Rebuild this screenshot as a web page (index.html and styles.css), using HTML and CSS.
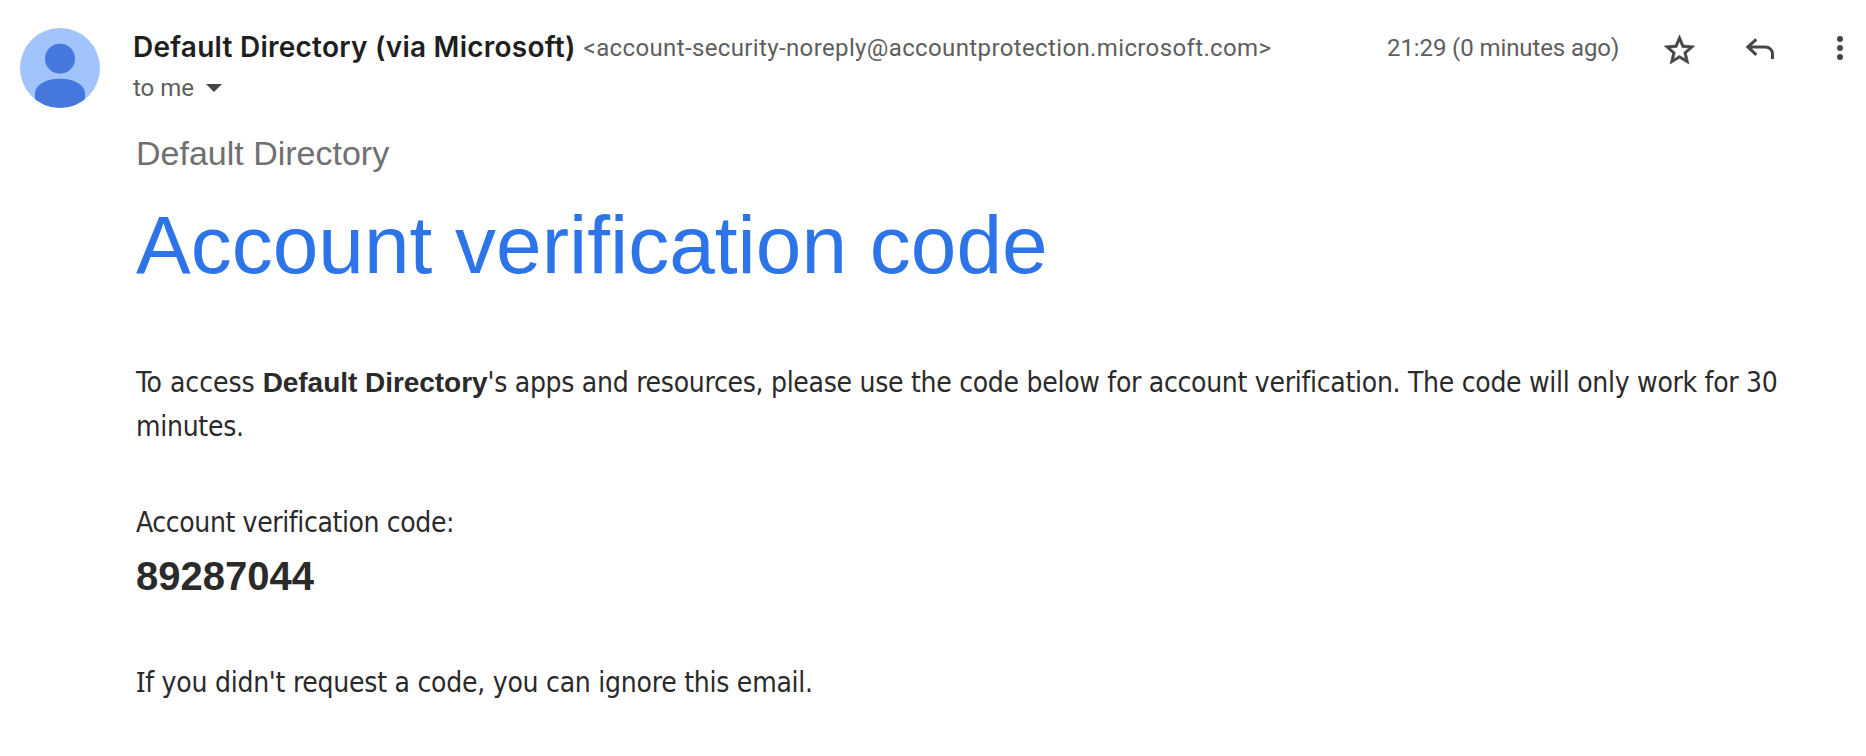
FILE: index.html
```html
<!DOCTYPE html>
<html lang="en">
<head>
<meta charset="utf-8">
<title>Account verification code</title>
<link rel="stylesheet" href="styles.css">
</head>
<body>
<article class="message">
  <svg class="avatar" viewBox="0 0 80 80" aria-hidden="true">
    <defs><clipPath id="disc"><circle cx="40" cy="40" r="40"/></clipPath></defs>
    <circle cx="40" cy="40" r="40" fill="#a1c4fd"/>
    <g clip-path="url(#disc)" fill="#4577dd">
      <circle cx="40" cy="30.7" r="15"/>
      <path d="M15 80V66C15 56 27 50.700 40 50.700S65 56 65 66V80Z"/>
    </g>
  </svg>
  <div class="main">
    <header class="header">
      <div class="sender">
        <span class="name">Default Directory (via Microsoft)</span>
        <span class="email">&lt;account-security-noreply@accountprotection.microsoft.com&gt;</span>
      </div>
      <div class="tools">
        <span class="time">21:29 (0 minutes ago)</span>
        <svg class="star" viewBox="2 2 20 19"><path d="M22 9.240l-7.190-.620L12 2 9.190 8.630 2 9.240l5.460 4.730L5.820 21 12 17.270 18.180 21l-1.630-7.030L22 9.240zM12 15.400l-3.760 2.270 1-4.280-3.320-2.880 4.380-.380L12 6.100l1.710 4.040 4.380.380-3.320 2.880 1 4.280L12 15.400z"/></svg>
        <svg class="reply" viewBox="0 0 28 22"><path d="M10.300 1.300L1.900 8.900l8.400 7.900M2 8.900h17.500a7 7 0 0 1 7 7V21"/></svg>
        <svg class="more" viewBox="0 0 6 24"><circle cx="3" cy="3" r="3"/><circle cx="3" cy="12" r="3"/><circle cx="3" cy="21" r="3"/></svg>
      </div>
    </header>
    <div class="recipient">to me <svg class="caret" viewBox="0 0 16 8"><path d="M0 0h16L8 8z"/></svg></div>
    <section class="body">
      <p class="org">Default Directory</p>
      <h1 class="title">Account verification code</h1>
      <p class="text"><span class="lead">To access </span><b class="tenant">Default Directory</b>'s apps and resources, please use the code below for account verification. The code will only work for 30 minutes.</p>
      <p class="text label">Account verification code:</p>
      <p class="code">89287044</p>
      <p class="text note"><span class="cap">I</span>f you didn't request a code, you can ignore this email.</p>
    </section>
  </div>
</article>
</body>
</html>
```
FILE: styles.css
```css
* { box-sizing: border-box; }
body { margin: 0; background: #fff; }
p, h1 { margin: 0; font-weight: 400; }
svg { display: block; flex: none; }

.message { display: flex; height: 756px; padding: 28px 23px 0 20px; gap: 33px; }
.avatar { width: 80px; height: 80px; }
.main { flex: 1; min-width: 0; }

.header { display: flex; justify-content: space-between; height: 40px; font: 24px/40px Roboto, sans-serif; color: #5e5e5e; white-space: nowrap; }
.sender { display: flex; align-items: flex-start; gap: 8px; }
.name { font: 600 28px/39px Inter, sans-serif; letter-spacing: .24px; color: #1f1f1f; }
.email { letter-spacing: .37px; }
.tools { display: flex; align-items: flex-start; }
.time { width: 277px; letter-spacing: -.1px; }
.star { width: 31px; height: 29px; margin-top: 7px; fill: #444746; stroke: #444746; stroke-width: .4; overflow: visible; }
.reply { width: 28px; height: 22px; margin: 10px 63px 0 51px; fill: none; stroke: #444746; stroke-width: 3; }
.more { width: 6px; height: 24px; margin-top: 8px; fill: #444746; }

.recipient { display: flex; align-items: center; gap: 12px; height: 40px; font: 24px/40px Roboto, sans-serif; color: #5e5e5e; }
.caret { width: 16px; height: 8px; fill: #444746; }

.body { padding: 25px 55px 0 3px; color: #2a2a2a; }
.org { font: 34px/40px "Liberation Sans", Arial, sans-serif; color: #707070; }
.title { margin-top: 24px; font: 82px/96px "Liberation Sans", Arial, sans-serif; color: #2c74e8; }
.text { font: 28px/44px "DejaVu Sans Condensed", "DejaVu Sans", sans-serif; letter-spacing: -.285px; }
.title + .text { margin-top: 68px; }
.lead { letter-spacing: -.03px; }
.tenant { font: 700 28px/40px "Liberation Sans", Arial, sans-serif; letter-spacing: -.04px; }
.label { margin-top: 52px; letter-spacing: -.38px; }
.code { margin-top: 7px; font: 700 40px/48px "Liberation Sans", Arial, sans-serif; }
.note { margin-top: 61px; letter-spacing: -.25px; }
.cap { font-family: "Noto Sans", sans-serif; line-height: 1; }
```
